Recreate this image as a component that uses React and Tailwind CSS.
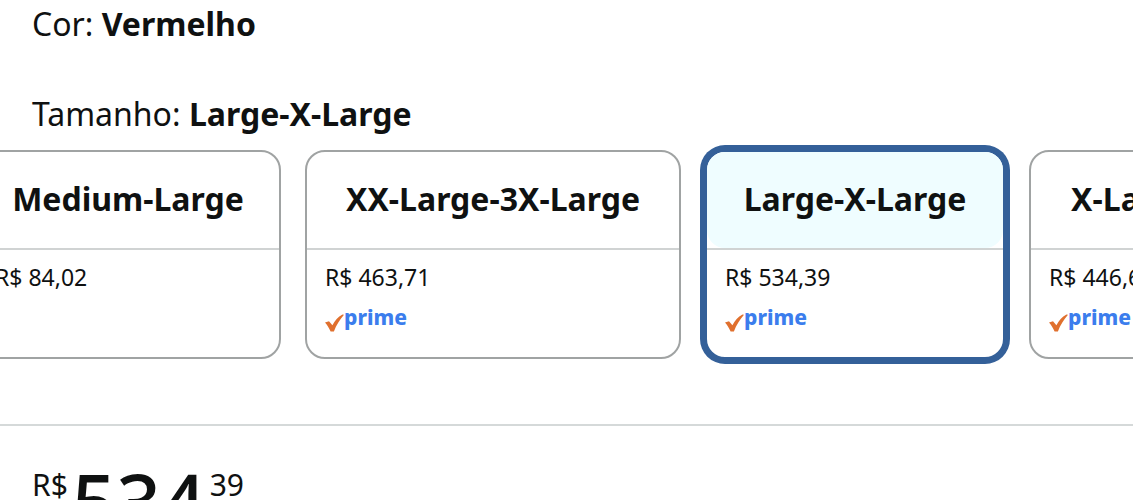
const sizes = [
  { name: 'Medium-Large', price: 'R$ 84,02', prime: false, width: 'w-[306px]' },
  { name: 'XX-Large-3X-Large', price: 'R$ 463,71', prime: true, width: 'w-[376px]' },
  { name: 'Large-X-Large', price: 'R$ 534,39', prime: true, width: 'w-[300px]', selected: true },
  { name: 'X-Large-XX-Large', price: 'R$ 446,60', prime: true, width: 'w-[360px]' },
];

function PrimeBadge() {
  return (
    <span className="mt-3 flex items-center text-[21px] leading-6 font-extrabold text-[#3b7ded]">
      <svg viewBox="0 0 19 18" className="mt-2 -mb-1 h-[18px] w-[19px]" aria-hidden="true">
        <path d="M0 8.6 4 7.2 7.4 11.2C9.8 6.6 13 2.6 17.4 0.4L19 0.8C14.4 6 11.4 11 8.9 17.6L5.6 17.6C4 14 2.4 11.2 0 8.6Z" fill="#e0702e" />
      </svg>
      prime
    </span>
  );
}

function SizeCard({ name, price, prime, width, selected }) {
  const frame = selected
    ? 'border-[#346099] ring-[5px] ring-[#346099]'
    : 'border-[#a0a3a3]';
  return (
    <li className={`${width} shrink-0`}>
      <button
        type="button"
        aria-pressed={Boolean(selected)}
        className={`flex h-[209px] w-full flex-col rounded-[20px] border-2 bg-white text-left ${frame}`}
      >
        <span
          className={`flex h-24 w-full items-center justify-center rounded-[18px] pb-0.5 text-[32px] leading-10 font-bold whitespace-nowrap ${selected ? 'bg-[#effdff]' : ''}`}
        >
          {name}
        </span>
        <span className="flex w-full flex-col border-t-2 border-[#d0d3d3] px-[18px] pt-[11px]">
          <span className="text-[23px] leading-8">{price}</span>
          {prime && <PrimeBadge />}
        </span>
      </button>
    </li>
  );
}

export default function App() {
  return (
    <main className="h-screen overflow-hidden bg-white font-['Noto_Sans',sans-serif] text-[#0f1111]">
      <h2 className="px-8 pt-1 text-[32px] leading-10">
        Cor: <strong>Vermelho</strong>
      </h2>
      <h2 className="mt-[50px] px-8 text-[32px] leading-10">
        Tamanho: <strong>Large-X-Large</strong>
      </h2>
      <ul className="mt-4 -ml-[25px] flex gap-6">
        {sizes.map((size) => (
          <SizeCard key={size.name} {...size} />
        ))}
      </ul>
      <hr className="mt-[65px] border-t-2 border-[#d5d9d9]" />
      <p className="flex items-start px-8 pt-[39px]">
        <span className="text-[30px] leading-10">R$</span>
        <span className="px-1 text-[78px] leading-[72px] font-medium">534</span>
        <span className="text-[30px] leading-10">39</span>
      </p>
    </main>
  );
}
